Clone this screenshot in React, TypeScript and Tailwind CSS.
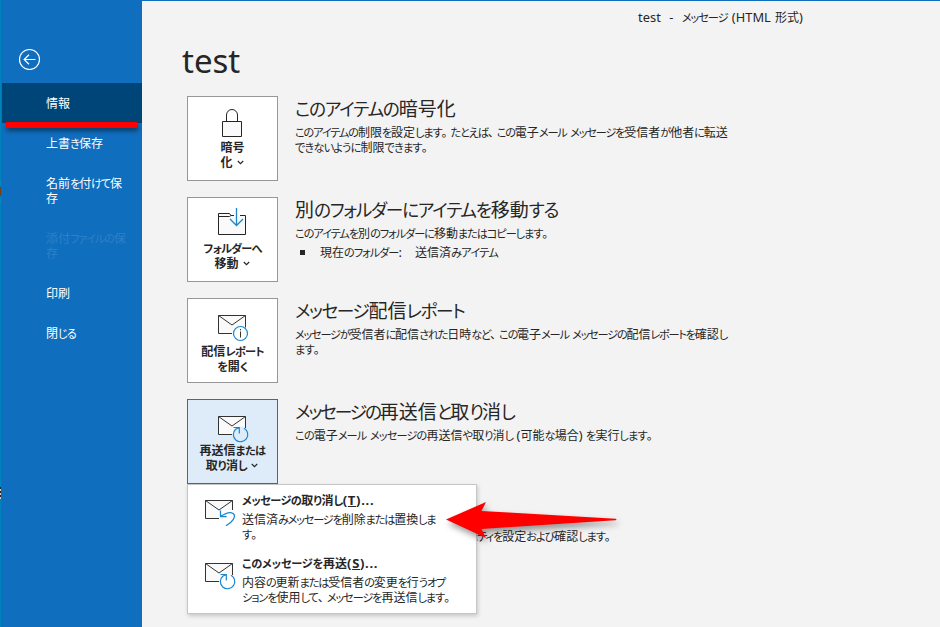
import type { ReactNode } from 'react';
import clsx from 'clsx';

type Line = { text: string; track?: string };

const NAV: { lines: Line[]; active?: boolean; disabled?: boolean }[] = [
  { lines: [{ text: '情報' }], active: true },
  { lines: [{ text: '上書き保存', track: 'tracking-[-0.8px]' }] },
  { lines: [{ text: '名前を付けて保', track: 'tracking-[-1.2px]' }, { text: '存' }] },
  { lines: [{ text: '添付ファイルの保', track: 'tracking-[-1.1px]' }, { text: '存' }], disabled: true },
  { lines: [{ text: '印刷' }] },
  { lines: [{ text: '閉じる', track: 'tracking-[-0.9px]' }] },
];

const Jp = ({ text, track }: Line) => (
  <span className={clsx('whitespace-pre', track)}>
    {(text.match(/[ぁ-ヿ]+|[。、]|[ -~]+|[一-龥]+/g) ?? []).map((run, i) => (
      <span
        key={i}
        className={clsx(
          /[ぁ-ヿ]/.test(run) && 'text-[0.93em]',
          /[。、]/.test(run) && "tracking-[-3px] [font-feature-settings:'palt'_0]",
          /[ -~]/.test(run) && 'text-[1.07em] tracking-[0.05px]',
          /[一-龥]/.test(run) && 'tracking-[0px]'
        )}
      >
        {run}
      </span>
    ))}
  </span>
);

const Lines = ({ lines }: { lines: Line[] }) => (
  <>
    {lines.map((line) => (
      <div key={line.text} className="h-[15px] whitespace-pre">
        <Jp {...line} />
      </div>
    ))}
  </>
);

const Chevron = () => (
  <svg className="inline-block w-[7px] h-[5px] ml-[4px] mr-px mb-[2px]" viewBox="0 0 7 5" fill="none" stroke="#262626" strokeWidth="1.2">
    <path d="M0.8 1l2.7 2.6L6.2 1" />
  </svg>
);

const LockIcon = () => (
  <svg className="w-[29px] h-[31px]" viewBox="0 0 29 31" fill="none" stroke="#262626">
    <path d="M8.5 15.500V9a5.500 5.500 0 0 1 11 0v6.500" />
    <path d="M4.500 15.500h19v15h-19z" fill="#fafafa" />
  </svg>
);

const FolderIcon = () => (
  <svg className="w-[29px] h-[31px]" viewBox="0 0 29 31" fill="none" stroke="#262626">
    <path d="M.5 6.500h11l1.500 2h14.500v19H.5z" fill="#fafafa" stroke="none" />
    <path d="M16 8.500h-3l-1.500-2H.5v21h27v-19H22M.5 9.500h11l1.500-1" />
    <path d="M18.500 1v17.500M12 12l6.500 6.500L25 12" stroke="#1a86d0" strokeWidth="1.300" />
  </svg>
);

const Envelope = ({ children }: { children: ReactNode }) => (
  <svg className="w-[31px] h-[30px] shrink-0 overflow-visible" viewBox="0 0 31 30" fill="none" stroke="#333">
    <path d="M1.500 2.500h27v18h-27z" fill="#fafafa" stroke="none" />
    <path d="M15 20.500H1.500v-18h27v12M1.500 2.500l13.500 9.500 13.500-9.500" />
    {children}
  </svg>
);

const InfoBadge = () => (
  <g>
    <circle cx="23.500" cy="20.500" r="7" fill="#fff" stroke="#1a86d0" strokeWidth="1.200" />
    <path d="M23.500 18.500v6M23.500 16v1.300" />
  </g>
);

const ResendBadge = ({ fill }: { fill: string }) => (
  <g>
    <circle cx="23.500" cy="20.500" r="8" fill={fill} stroke="none" />
    <path d="M27 14.200a7.200 7.200 0 1 1-8.300 1l3.500-1.700M16.500 13.500h5.800v6" stroke="#1a86d0" strokeWidth="1.200" />
  </g>
);

const RecallBadge = () => (
  <g>
    <path d="M15.500 13l9-1h7v16h-16z" fill="#fff" stroke="none" />
    <path d="M16.500 12.500v6.200h6.200M16.800 18.400c3.500-2.400 6.500-4.300 10-3.800 4 .7 4.800 3.400 2.400 7-1.700 2.500-4.400 4.600-7.200 6.200" stroke="#1a86d0" strokeWidth="1.300" />
  </g>
);

const SECTIONS = [
  {
    icon: <LockIcon />,
    iconPad: 'pt-[9px]',
    labelGap: 'mt-[3px]',
    button: [{ text: '暗号' }, { text: '化' }],
    chevron: true,
    title: { text: 'このアイテムの暗号化', track: 'tracking-[-1.2px]' },
    body: [
      { text: 'このアイテムの制限を設定します。たとえば、この電子メール メッセージを受信者が他者に転送', track: 'tracking-[-1.14px]' },
      { text: 'できないように制限できます。', track: 'tracking-[-0.8px]' },
    ],
  },
  {
    icon: <FolderIcon />,
    iconPad: 'pt-[9px]',
    labelGap: 'mt-[3px]',
    button: [{ text: 'フォルダーへ', track: 'tracking-[-0.75px]' }, { text: '移動' }],
    chevron: true,
    title: { text: '別のフォルダーにアイテムを移動する', track: 'tracking-[-1.25px]' },
    body: [{ text: 'このアイテムを別のフォルダーに移動またはコピーします。', track: 'tracking-[-1.05px]' }],
    folder: true,
  },
  {
    icon: <Envelope><InfoBadge /></Envelope>,
    iconPad: 'pt-[14px]',
    labelGap: 'mt-px',
    button: [{ text: '配信レポート', track: 'tracking-[-0.75px]' }, { text: 'を開く', track: 'tracking-[-0.4px]' }],
    title: { text: 'メッセージ配信レポート', track: 'tracking-[-1.4px]' },
    body: [
      { text: 'メッセージが受信者に配信された日時など、この電子メール メッセージの配信レポートを確認し', track: 'tracking-[-1.21px]' },
      { text: 'ます。', track: 'tracking-[-0.8px]' },
    ],
  },
  {
    icon: <Envelope><ResendBadge fill="#deecf9" /></Envelope>,
    iconPad: 'pt-[14px]',
    labelGap: '-mt-px',
    button: [{ text: '再送信または', track: 'tracking-[-0.6px]' }, { text: '取り消し', track: 'tracking-[-0.5px]' }],
    chevron: true,
    selected: true,
    title: { text: 'メッセージの再送信と取り消し', track: 'tracking-[-2.1px]' },
    body: [{ text: 'この電子メール メッセージの再送信や取り消し (可能な場合) を実行します。', track: 'tracking-[-0.83px]' }],
  },
  {
    icon: <FolderIcon />,
    iconPad: 'pt-[9px]',
    labelGap: 'mt-[3px]',
    button: [{ text: 'プロパティ', track: 'tracking-[-0.6px]' }],
    title: { text: 'プロパティ', track: 'tracking-[-1.3px]' },
    body: [{ text: 'このアイテムの詳細オプションとプロパティを設定および確認します。', track: 'ml-[14px] tracking-[-1.08px]' }],
  },
];

const MENU = [
  {
    icon: <Envelope><RecallBadge /></Envelope>,
    title: 'メッセージの取り消し',
    track: 'tracking-[-0.55px]',
    accel: 'T',
    body: [
      { text: '送信済みメッセージを削除または置換しま', track: 'tracking-[-1.2px]' },
      { text: 'す。', track: 'tracking-[-0.8px]' },
    ],
  },
  {
    icon: <Envelope><ResendBadge fill="#fff" /></Envelope>,
    title: 'このメッセージを再送',
    track: 'tracking-[-0.2px]',
    accel: 'S',
    body: [
      { text: '内容の更新または受信者の変更を行うオプ', track: 'tracking-[-1.19px]' },
      { text: 'ションを使用して、メッセージを再送信します。', track: 'tracking-[-1.07px]' },
    ],
  },
];

const Sidebar = () => (
  <nav className="relative w-[142px] shrink-0 bg-[#106ebe] border-l border-[#0083bd] text-white">
    <svg className="block w-[22px] h-[22px] mt-[48px] ml-[17px] mb-[13px]" viewBox="0 0 22 22" fill="none" stroke="#fff" strokeWidth="1.200">
      <circle cx="11.500" cy="11.500" r="10" />
      <path d="M17.500 11.500H6M11 6.700l-4.900 4.800 4.900 4.800" />
    </svg>
    {NAV.map((item) => (
      <div
        key={item.lines[0].text}
        className={clsx(
          'ml-px pl-[44px] py-[12.5px] leading-[15px]',
          item.active && 'bg-[#004578]',
          item.disabled && 'text-[#2e80c8]'
        )}
      >
        <Lines lines={item.lines} />
      </div>
    ))}
    {/* marker under the active tab */}
    <div className="absolute left-[5px] top-[122px] w-[131px] h-[6px] bg-[#fe0000] shadow-[1px_3px_4px_rgba(0,0,0,0.45)]" />
    <div className="absolute -left-px top-[187px] w-px h-[9px] bg-[#704018]" />
    <div className="absolute -left-px top-[487px] w-px h-[12px] bg-[repeating-linear-gradient(#222_0_2px,#ccc_2px_4px)]" />
  </nav>
);

const ResendMenu = () => (
  <div className="absolute left-0 top-[85px] w-[290px] h-[130px] bg-white border border-[#c6c6c6] shadow-[1px_2px_4px_rgba(0,0,0,0.18)] pt-[8px] z-10">
    {MENU.map((item) => (
      <div key={item.accel} className="flex h-[63px] pl-[16px]">
        <div className="w-[38px] pt-[5px]">{item.icon}</div>
        <div className="leading-[15px]">
          <div className="h-[15px] mb-[4px] font-bold whitespace-pre">
            <Jp text={item.title} track={item.track} />
            <span className="text-[13px] tracking-[0.7px]">
              (<span className="underline">{item.accel}</span>)...
            </span>
          </div>
          <Lines lines={item.body} />
        </div>
      </div>
    ))}
    <svg className="absolute left-[252px] top-[9px] w-[190px] h-[56px]" viewBox="0 0 190 56">
      <path
        className="drop-shadow-[2px_4px_3px_rgba(0,0,0,0.4)]"
        d="M6 25.500L46 8l-4.500 9L175.500 24.800q2 .7 0 1.400L41.500 35l4.500 9z"
        fill="#fe0000"
      />
    </svg>
  </div>
);

export default function App() {
  return (
    <div className="flex w-[940px] h-[627px] overflow-hidden bg-[#f3f3f3] text-[#262626] text-[12px] font-['Noto_Sans','Noto_Sans_CJK_JP',sans-serif] [font-feature-settings:'palt']">
      <Sidebar />
      <main className="grow border-t border-[#106ebe] pl-[45px]">
        <div className="flex h-[95px]">
          <h1 className="w-[456px] -ml-[5px] pt-[40px] text-[33px] leading-[40px]">test</h1>
          <div className="pt-[9px] leading-[15px] whitespace-pre [word-spacing:0.8px]">
            <Jp text="test  -  メッセージ (HTML 形式)" track="tracking-[-1px]" />
          </div>
        </div>
        <div className="flex flex-col gap-[16px]">
          {SECTIONS.map((section) => (
            <section key={section.title.text} className="relative flex h-[85px]">
              <div
                className={clsx(
                  'flex flex-col items-center w-[91px] h-[85px] border text-center font-bold leading-[15px]',
                  section.iconPad,
                  section.selected ? 'bg-[#deecf9] border-[#0f78c8]' : 'bg-white border-[#979797]'
                )}
              >
                {section.icon}
                <div className={section.labelGap}>
                  <div className="h-[15px]"><Jp {...section.button[0]} /></div>
                  {section.button[1] && (
                    <div className="h-[15px]">
                      <Jp {...section.button[1]} />
                      {section.chevron && <Chevron />}
                    </div>
                  )}
                </div>
              </div>
              <div className="ml-[17px] pt-px leading-[15px]">
                <h2 className="h-[28px] text-[19px] leading-[25px] whitespace-pre">
                  <Jp {...section.title} />
                </h2>
                <Lines lines={section.body} />
                {section.folder && (
                  <div className="flex items-center mt-[4px]">
                    <span className="w-[5px] h-[5px] ml-[5px] mr-[15px] bg-[#262626]" />
                    <span className="w-[95px]"><Jp text="現在のフォルダー:" track="tracking-[-1px]" /></span>
                    <Jp text="送信済みアイテム" track="tracking-[-0.7px]" />
                  </div>
                )}
              </div>
              {section.selected && <ResendMenu />}
            </section>
          ))}
        </div>
      </main>
    </div>
  );
}
